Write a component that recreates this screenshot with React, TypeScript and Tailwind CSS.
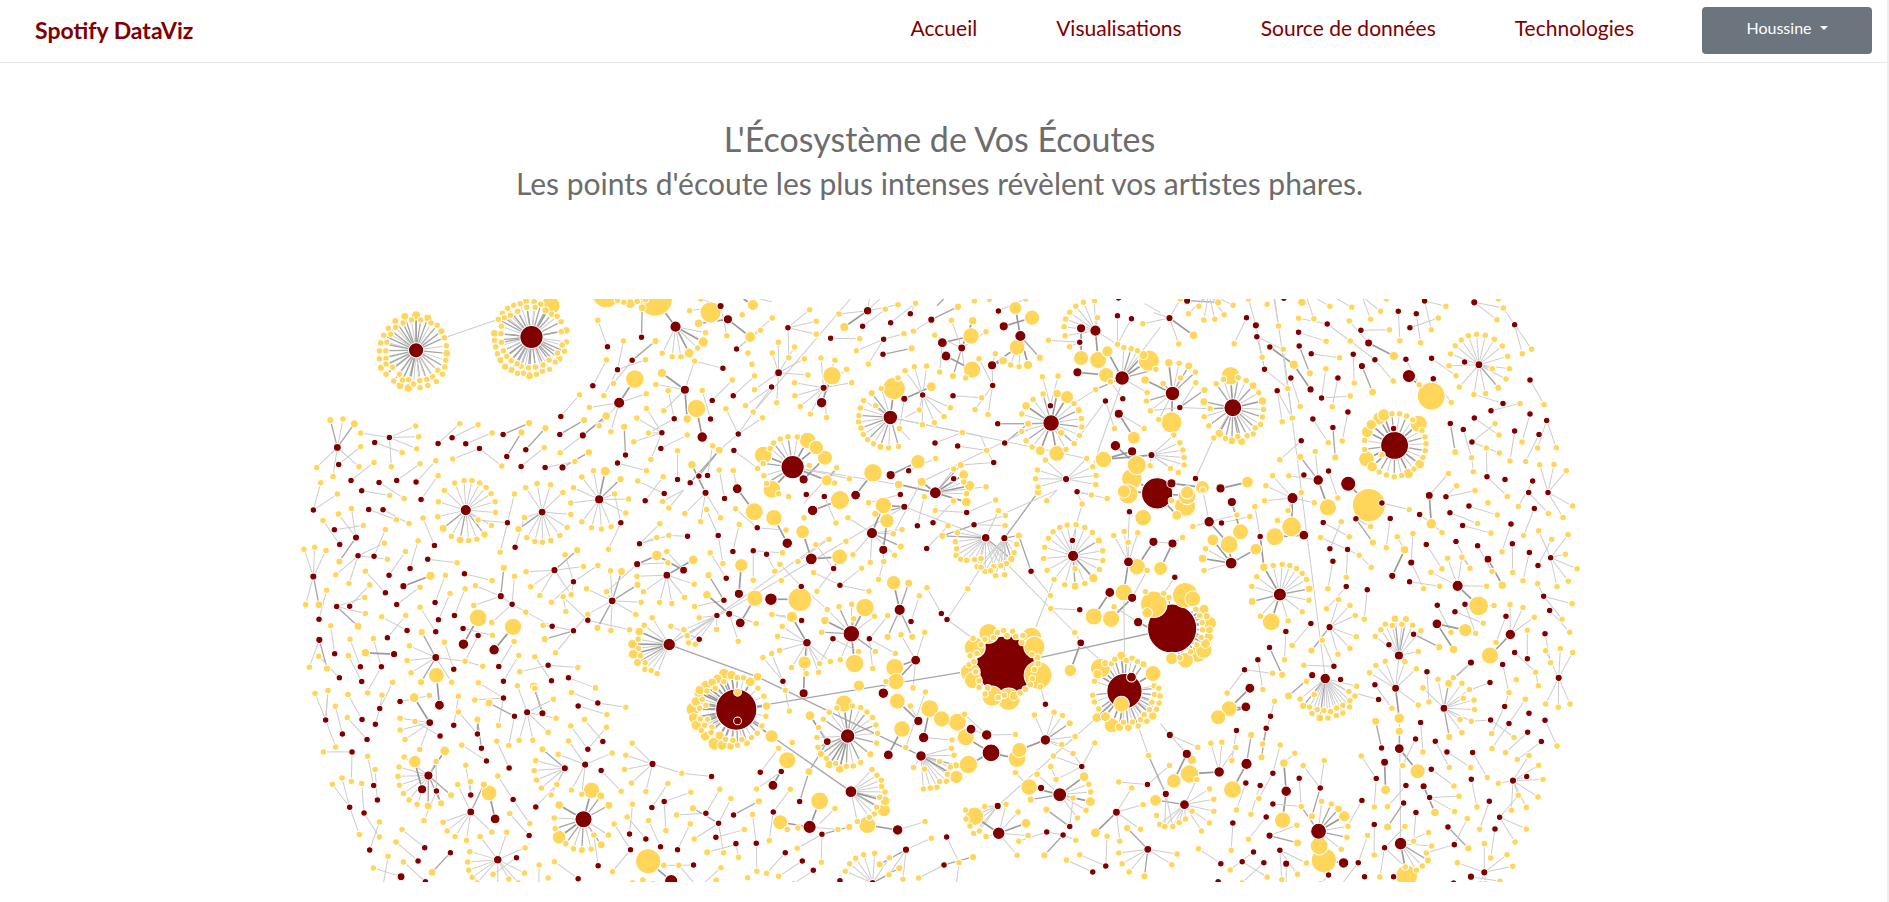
const ARTIST = "#800000";
const LISTEN = "#ffd55a";

// Each group: "artist>track track ...;" with every point written x,y[,radius].
// A leading "~" marks a link origin that is not an artist; ">" alone lists unlinked tracks.
type Sheet = { dx: number; dy: number; data: string };

const SHEETS: Sheet[] = [
  {
    dx: 0,
    dy: 0,
    data: `348,181,21>348,76,12 314,79,10 286,93,9 383,84,10 362,90 334,90 309,99 287,112 265,115 272,133 251,136 260,157 242,159 257,182 238,182 258,205 238,206 258,222 243,233,9 278,232 258,253 298,253 281,273 307,270 300,287,10 326,269 325,294,11 341,282 359,271 360,293 380,268 383,286 398,260 409,274 413,241 427,253 434,231 437,211 440,190,10 439,167 433,143 424,124,9 411,106 393,99;
~433,143>595,88;
694,141,33>678,33,9 702,35 751,47,27 736,61,9 755,73 771,79 783,95 798,121,10 783,125 799,156 793,184 786,165 772,189 778,206,9 765,216 748,238 747,210 727,244 729,225 709,253 706,231 688,257,10 685,233 670,250 663,229 652,250 651,221 634,240,9 633,212 615,230,9 620,199 601,210,9 610,182 592,191 604,157 587,171 583,151 583,130,10 603,131 604,109 595,88 607,70 613,83 631,76 623,55 641,46 653,64 660,41 680,52 705,52 722,43;
>918,12,40 952,31 971,37 990,41,13 1011,34 1036,28,9 1231,67,30;
1024,142>1026,53,10;
1126,110,15>1065,27,50 1216,128 1209,156,14 1192,174 1167,189,13 1142,200 1116,200 1086,190;
922,170>893,91;996,211>1066,153,9 940,280;952,239>970,153 1036,209 911,317;878,287>919,210;
957,338,15>1004,267,26 1038,311 868,352 932,425 897,407;
1154,299,12>1085,249,12 1067,283 1183,213 1161,387,11 1091,362;1268,235>1183,213;
1206,441,14>1189,355,26;1122,386>1104,302 1045,429;1231,387>1206,301;1236,331>1296,270;
782,379>838,314;779,433>852,390,9;848,436,9>918,378,11 780,488;
1085,428>1010,384 1039,355 1045,429 1001,455 1052,508;
1082,475>1161,435;976,495>972,410,9;952,519>1039,542;787,532,9>866,487,9 824,514;735,532>824,514;663,529>732,473;677,479>736,414,9;620,499>664,427,9;609,433>687,399,9;538,475>458,507 605,528;497,461>576,429;456,443>534,404;414,460>479,401;
112,472,10>91,390,9 129,387 163,401,10 50,532 177,530 99,559;116,523>182,470;268,442>182,429 347,408 356,440 350,476 274,530;224,457>306,487;153,571>222,517;237,577>312,625;290,571>360,521;348,576>407,512;363,628>414,557;185,602>269,616;40,660>62,578 112,612;
497,660,15>464,579 492,571 516,571 539,579 558,592 573,611 585,635 586,667 574,706 553,733,9 530,747 506,751 480,749,10 454,738 429,715,10 413,680 415,635 433,601 534,690;
1196,558>1257,480,10;1170,578>1257,480,10;1216,608,9>1175,524,11 1154,670 1261,683 1201,695;1132,568>1132,482;1222,556>1237,467;1273,625>1257,540;
897,628,12>845,561 880,542 915,543,13 961,567,9 977,669 943,612 985,627 933,710 904,717 874,713 845,695 812,639 820,593;
726,666,10>677,593 711,580 751,584 788,607 812,673 801,712 779,736 752,751 727,756 704,754 680,742 655,717,9 673,682;
1092,610>1013,573;1035,632>1089,560;622,698>643,612 600,786 534,690;645,771>673,682;
1261,48,9>1280,137 1202,27 1168,62;1283,88,12>1195,100,11;1314,432>1277,356`,
  },
  {
    dx: 1290,
    dy: 0,
    data: `-7,88,12>60,141,15;>68,45,15 36,74 503,264 732,33 777,28 670,637 6,270 53,189 65,223;
19,177>126,84 91,121;173,113>238,59 258,94 258,133 176,203;
145,248,10>144,157 126,189 193,171 222,206 233,255 139,338 73,299;
~360,27>69,366;124,291>46,346 69,366;9,317>73,258;~90,27>125,36;~40,27>68,45,15;24,432>97,383 69,366 -33,480;
301,145>388,146;412,62,11>342,111,12 326,72 503,44 418,20 455,20;397,109>465,58;481,98>556,40;540,71>556,40;603,89,9>683,50,9 549,124;460,148>521,131 378,182 414,222;458,193>544,175,9;~640,27>620,47,9;
280,293,9>272,204 314,211 349,238 364,278 193,278 194,317 210,349 240,372 289,382;274,338,14>305,257,26;
480,382,20>491,295,32 453,295 424,309,9 400,331 436,347 390,354 386,376 385,396 392,414 399,433 412,449 430,461 450,470,9 475,474 505,469;
~480,382>752,438 1069,505;
522,326,9>603,290,13 507,415;~507,415>539,450;
577,315>524,242 552,230 589,228 660,353 641,379 612,398 576,404 567,360;~567,360>523,382;
636,158,13>722,138,23 628,246;694,174,10>663,91 727,92,11 767,125 613,136 668,258,9 706,264;647,198,13>725,239,24;
668,317>754,323;614,459>696,427;682,468>769,481;790,517>769,481 691,525;~752,438>769,481;823,459>893,401,9;802,401>893,401,9;~574,575>893,420;
785,226,12>860,172,22 818,212,11 795,191 787,286;787,286>746,206 734,358 773,373;
804,63>886,27;820,109,12>905,83,21;
870,138,15>855,54,18 860,172,22 841,225 866,230 893,225,12 928,203,9;
962,399,23>887,347,11 908,328 938,312 980,310,11 1010,321,18 1031,340 1045,360,9 1053,385 1054,411 1047,436 1031,460 1007,478 992,428,9 979,490,22 930,482,13 905,471 887,452 874,424 893,401,9 874,372;
960,347>936,260 983,258;
1052,115,12>1052,204,21;1095,122,15>1103,210,24 1001,110 1004,137 1006,87 1018,67 1036,49 1059,37 1092,32 1101,83 1161,163;
1048,157>954,151 1017,170;1161,77>1161,163;1203,86>1161,163;1164,24>;
1175,264,20>1131,184,15 1180,173 1202,176 1221,182 1239,195,12 1255,212,30 1276,238 1250,307 1096,298;
~1170,290>1087,530;~1290,110>1175,264;~1096,298>1031,340;
1177,326>1140,275;1125,333>1152,415 1031,460;1041,247,12>1127,255,21;~1290,68>1242,41;
1165,371,12>1210,443,18 1241,415;1155,467,14>1219,525,27;1205,484,12>1119,508,23;1263,495,9>1119,508,23 1259,527;
1280,610,45>1204,566,29 1180,604,18;
1007,567,9>945,510 921,540 916,566 923,591 1069,505 1087,530 1097,556 1096,583;
187,531,33>99,495,25 120,475 130,459 150,447 173,440 201,441 232,451,23 258,472,20 99,520 101,557 109,580 125,598,25 290,571,15 237,526 313,579;
11,481>82,535;220,568,12>284,503,21;~319,533>290,571,15;~187,531>357,566 505,583;
>357,566 319,533;
21,596,13>72,665,25 9,541;376,615,13>428,548,26;481,555,12>563,515,20;535,542>616,505;
615,608,16>505,583,11 574,575,12 670,537 691,525,9 700,554,13 700,576 718,587,14 767,590 708,611 708,636,13;670,566>;~220,640>319,533`,
  },
  {
    dx: 2580,
    dy: 0,
    data: `27,84,9>99,136,11 55,162 -53,101 60,27;~-20,68>27,84;80,32,9>173,37,9;
~145,10>84,71 115,49 130,90 163,88 191,74 218,46 173,37,9;
>84,71 115,49 130,90 163,88 191,74 218,46;
258,83>221,161;286,106,9>264,27;289,140>368,178 305,202;328,171>400,224,12;450,298,9>400,224,12;312,238>382,295 305,202;350,302>365,395 395,384;391,264>419,349;
~343,27>354,108;~354,108>340,27 382,295;~370,190>494,1165;~286,106>312,238;~382,295>395,384;
>320,43 424,37,11 677,27 943,598 354,108 414,85 460,86 508,49 574,52 630,88 660,64;370,25>;~440,27>460,86;500,102>414,85 569,153;~470,27>508,49;~530,27>574,52;
414,127>497,154;416,168>448,250,9;452,191>537,203;483,324>496,236 569,318;532,264>515,350;578,193>581,279;604,228,9>636,306,10;601,121>687,119;624,159,10>700,198,12 566,93;643,209>569,153 698,273;~605,20>630,88 660,64;
713,64>718,152;748,113>833,84;767,71>780,158;792,33>812,119 856,49;736,208>776,284;745,258,18>812,318,40;818,266>872,337;813,205>886,257;
955,224,10>865,227 870,192 884,167 902,150 923,137 948,133 974,136 1001,148 1025,168 1041,199 1046,236 995,236 1036,267 1013,293,9 975,310 940,313 896,291;912,216>;
941,37,9>1028,54 1009,89;1062,104>1028,54 1085,191 1113,178;>1013,27;1108,270>1150,343;1027,340>940,313;991,362>1078,340;941,384>1015,435;934,456>1003,401 1016,489;869,400>884,486,9;908,418>933,503;~933,503>938,545;>938,545;979,560>977,474 1040,619;1033,568>;1062,423>1048,513;1108,372>1084,456;1158,391>1131,474 1187,473;1135,433>1095,514;1116,573>1073,649;1162,607>1137,524 1180,523 1217,542 1236,648 1207,682;
457,387>503,458;562,366>545,453;517,412>524,502,9;422,452>358,509;
702,466,40>656,385,18 670,375,17 694,371 717,371 738,378 757,390 774,401,24 784,421 793,441 796,461 794,482 787,502 777,522,13 760,537 744,550,14 723,556 701,560 678,555 656,546 635,530,14 618,507,22 664,494 612,478 612,451 620,425,16 632,404,14;699,415>;
217,353,25>210,257,26 189,268 233,263 257,271 278,287,10 295,308 306,333,11 309,358 306,381 300,403 284,414 278,432 260,437 243,454,10 232,439 214,452,10 195,445 176,430,11 145,407 131,380 149,356 130,335,10 167,281;
105,565>160,444;~217,353>160,444;
36,310,20>25,218,11 56,220 85,228,10 60,264 105,246 33,397,30 8,280 -30,362 -42,333 -5,388 -46,270,11;
58,352>106,278 132,300,9 149,356 -30,362;
-27,495,9>58,458 67,480 71,502 71,525 54,547 30,535 40,435;
33,580,12>126,592,19;180,595,12>261,576,16;>80,607,18;
430,555>;473,570,14>419,500,9 464,484 385,557 502,652,24;504,543>532,625;563,581,21>625,645,48;>336,557;
~806,616>864,550;~856,620>888,587;>864,550 888,587`,
  },
  {
    dx: 0,
    dy: 600,
    data: `206,58>289,89;249,59>327,100;103,119>190,106;168,142,9>115,72 154,55 118,214,9;119,163>69,91;174,197>253,159 262,207 107,254;~174,197>147,280;>147,280;222,198>256,118;403,166>369,84;383,207>471,218;330,235>354,152;267,255>316,184;310,288,9>391,257,12;
40,259,9>12,177 44,171 78,181 17,343 57,344,10;57,387>80,300;110,349>194,322 196,370 174,408,10;149,348>209,284;256,308>196,243;290,343>360,291;405,337>436,255;415,389>450,310;463,376>495,296;321,421>245,380;262,443>317,376;407,425>360,351;493,251>576,271;
602,318,9>611,233,9 526,287 521,346 636,342;636,342>643,258 575,397 677,366;756,408>677,366 729,405;820,422>734,447,9 766,488 756,408 863,372;863,390>789,320 988,419;
763,240,9>678,245 692,290 719,316 831,180,9 850,229 813,314;820,275>795,194 893,226 754,336 813,314;~789,320>797,364;>797,364;
936,332,10>931,242 964,244,10 1012,284,9 1023,336 1007,373 932,421 892,413,9 863,372 919,305 859,296;
1011,222,9>919,305 1070,196,14 1103,218;1150,240,10>1070,196,14 1100,184;1100,255,10>1179,209,13 1010,258 1030,305 1078,337 1115,340 1153,321 1182,282;
962,98>943,12 925,177;1018,161>1079,101 1070,142 1106,136;1162,138>1106,136;~1150,0>1087,34 1106,54;>1087,34 1106,54;1254,136>1219,58 1268,220;1278,264>1230,188;1271,330>1225,255,9 1183,349;1287,371,9>1220,314,11;1197,447>1112,408;
1250,376>1151,419 1161,437 1165,458 1185,462 1249,418 1197,383;
1107,463,17>1032,405 1056,383 1017,424,11 1014,447 997,462,13 1015,474 999,492,13 1021,497 1012,517,10 1035,518 1034,537 1053,541 1071,550 1151,419;
~1107,463>1250,376 1812,50;~1250,376>1580,147;~1107,463>1372,560,9;
58,449,9>28,531 81,535,9;104,491>92,407;181,530>150,447;244,530>220,445 200,608;118,563>56,498;185,574>145,497;282,492,9>196,488,11;
407,502,10>365,426,9 328,467 321,511 333,548 363,576,9 455,576 495,513;490,462,14>534,383,25;582,479,14>639,410,24;489,415>577,435;534,436>495,513;~495,513>548,528;>548,528;461,537>433,456;596,529>642,454;610,573>656,496;744,525>659,545 833,532;754,572>704,500;805,563>886,593;418,645,13>409,555,22;239,655>278,576 246,615;611,623>535,578;727,669>701,588,11;681,666>652,587;77,689>84,601`,
  },
  {
    dx: 1290,
    dy: 600,
    data: `171,159,14>131,83,23;247,61,14>329,30,27;228,13>;>145,11 175,19 1193,12,28 1238,83,23;282,19>317,99;510,13>415,38;81,113>16,56 167,120;8,184>27,103;69,182>157,188 69,270;109,192>134,243;26,311,12>33,225,18;30,398,13>74,324,23;-3,371,9>24,453 78,400;122,327,17>209,328,34;213,289>149,222 291,358;
243,206,16>217,125,19 328,200,22;310,235>257,164 260,303 328,200,22;~203,214>296,147;>347,153 153,271 221,83 203,214 296,147;
425,129,15>459,46,23 353,83 368,194 420,217 493,195 511,169,9 489,131 515,118;459,179,12>470,92,20 460,214;~460,214>445,268;>445,268;
522,50,9>459,46,23 435,71,9;~570,-20>495,120;561,107>582,20;608,98>670,33;589,175>653,107;709,67>615,61 796,30;329,285>250,247 394,234 416,303;
508,359,15>490,278,20 535,279,10 472,440,9 546,440,9;542,394>567,317;
363,431,23>404,352,26 284,391,11 274,426 291,358 326,350 364,342 370,386 433,378 435,484 373,520,26;
308,446>268,520 385,484;417,446>472,377 427,535 495,490;~363,431>330,509;>330,509;
556,510,13>583,426 512,434 493,532,25 497,574,23 548,593;
230,458,11>185,380,15 156,409 142,438 148,481 184,532 223,517,18 228,550 265,546 268,520 300,514;214,391>125,373;~185,380>125,373;
158,573>98,502 124,490 165,600;
766,143,11>681,128 675,155 679,176 677,196 691,207 709,210 733,208 752,205 740,230 764,244 790,229 828,220 843,207,9 811,227 804,62 636,137,9;
822,144,9>865,136,9 859,162 851,187 843,207,9 828,220 811,227 781,242 796,257 823,254 764,244 752,231 740,230 923,6,10;
731,104>636,137,9 824,106 825,76;~522,50>766,143;902,243>865,136,9 960,316;~712,296>752,231;650,388>712,296 728,445;633,370>590,293;
1048,359>961,355;~828,220>961,355;~961,355>1033,427;
1028,197,15>968,125 988,112 1010,105 1037,104 1063,112 1086,127 1105,151,9 1117,182 1117,211 1107,238 1089,264,12 1063,280 1034,288,10 1003,284 971,268 950,240 940,205 943,171 954,144 1034,236;1026,151>;
~1055,42>1028,140;~971,268>916,412;~980,0>949,32;>949,32;~980,0>822,70;1040,5>1130,25 1083,15 1055,42;
1197,65>1193,156;1194,215,13>1150,136 1181,124 1222,128 1193,156 1180,307,24;1269,155,12>1220,230,23;
1138,307,13>1090,379,24;1205,323,12>1142,386,24 1250,241;1223,396,12>1151,350;~1223,396>1260,415,11;>1250,368,14 1245,305 1290,235,19;
1051,458,10>1020,541,17 1033,427;~1051,458>1110,510;
~825,525>1325,415,9;~825,525>18,658,9;>386,586,15;
825,525,86>775,430,28 733,472,30 903,443,30 912,470,30 923,555,40 720,547,28 728,570,24 728,445 764,447 789,443 801,427 820,421 830,437 847,423 856,439 878,436 875,457 905,493 921,502,9 923,521 912,538 906,565 900,583 752,464 740,490 719,497 716,524 736,545 731,515 746,572 746,592 772,593 835,627,32 785,618,29 764,611 803,622 822,615 851,617,12 869,608 885,597;
1182,603,51>1110,534,28 1101,552,12 1124,519,9 1143,521 1153,507 1173,497,12 1187,511 1205,504 1221,514 1239,522,9 1268,550,22 1092,573 1087,615 1092,635 1105,656 1099,682,13 1125,679,13 1144,705,21 1167,710,11 1179,696 1194,712,10 1206,695 1223,707 1230,688 1249,693 1241,673 1267,677,11 1257,658 1278,657 1264,636 1286,638 1272,613 1289,617 1271,587 1285,594 1173,642,22;
1203,561,13>;~1182,490>1180,307;~1223,707>1254,796`,
  },
  {
    dx: 2580,
    dy: 600,
    data: `35,415,72>74,315,36 97,326,22 25,322 -20,342,38 106,357 131,357,13 118,377 139,378,9 125,398 148,399,18 126,419 147,419,10 122,442 144,441,13 109,464 135,460,13 130,480,23 113,491,24 90,485 75,510,22 58,503 34,505,17;
43,261>10,310;36,160,12>0,235,19 66,142;~36,160>-15,155;
-10,10,45>74,47,30 80,17,25 33,32 49,76,13;
146,95,14>206,163,25 97,109 229,75 127,0;183,99>268,79;214,36,12>240,125,22 229,75;212,219,16>157,149,16 135,176 126,205,11 131,241 286,177,16 206,163,25;
299,139>283,49 310,231,11;396,24,15>312,32 383,61 393,110,28 422,7 461,38 336,-43 316,-13;430,135,13>343,140,25 351,91;
358,313,18>310,231,11 338,226 365,222 388,226 408,235 425,250 438,268 446,296,10 445,330 425,365 383,392 332,395,25 300,378 275,334,10 274,289 289,260;
488,97>566,140;508,176>542,95;561,178>480,142 596,195 557,261;~596,195>632,232;>632,232;517,213>502,296;557,289>498,356;620,299>611,387;>532,24;
586,86>637,157,9 630,109;664,39>746,58;689,85>677,173;695,257,9>732,179,11;~732,179>710,140;>710,140;752,217,9>757,130 789,295;747,275>837,288;797,163>844,236;777,73>844,127;806,16,10>812,101,14;856,20>943,2;868,68>951,100;906,106>991,129;925,48>1010,75;886,154>928,234;
891,287,15>811,246 861,204 904,201 978,288 954,347,28;~954,347>1000,346;>1000,346;~904,201>928,234;951,167>994,244;982,207,10>1025,285,11;1051,102>1024,185;1055,161>1056,247;1104,7>1163,70;>982,38;1121,55>1089,136;1106,187>1087,272;1132,226>1173,148;
1170,203>1134,122 1222,133 1214,192 1249,236 1223,273 1189,290;1149,318>1131,281 1234,341 1204,387;1167,361>1227,426;
830,345>871,426;829,401,13>914,420,18 879,478,11;913,342>945,429;883,365>968,399;1036,378>1006,457;1049,433,14>988,496,24 1048,343 1087,352 1121,381;1100,506>1100,420;1062,487>1125,546;1153,431>1170,518;
1194,563,9>1155,482 1199,475 1236,487 1155,641 1193,651 1228,641;1026,523>1045,607;931,517,9>864,580,10 878,563;988,577>926,600;799,545>805,635;~1125,546>1133,587;>1133,587;
507,411,9>534,328 568,346 584,376 587,440 568,474 532,492 453,481,9;451,400>395,466;376,424>372,509;327,472>365,554,9;292,509>307,598;252,539>336,549 200,610;268,594,13>206,655,22;520,528>430,525 485,450;455,555,9>384,617,10 438,573;
494,565,14>588,588 565,604 583,617 568,631 567,650 547,645 547,668 528,653 527,676 510,664 502,683 490,661 478,683,10 470,658 454,670 447,650 428,647,9 419,626 461,613;540,568>;654,628>565,604;
715,496,12>703,386,10 674,402 661,419 644,438 695,406 736,387,9 724,403 756,405 781,422 773,484 705,594;685,464>;759,432>836,471,9;
705,594,10>627,548 646,526 674,513 733,515 767,536 773,644 716,684,14;643,584>694,654;
850,654,10>832,567 864,580,10 904,579 926,598 908,624 940,629 942,658 932,693 898,688 904,727 866,740,9 787,593;
~717,690>720,1060;>1067,569`,
  },
  {
    dx: 0,
    dy: 1200,
    data: `77,89>45,9 84,1 107,170;127,131>106,48;186,88>144,13;201,148>142,82;226,102>239,55;>203,8 744,563 1028,569 997,577 1059,580;156,185>70,185 154,274;
389,97,10>342,22,13 300,84 300,119 315,148 359,178;420,137>345,94;300,34>388,16;461,105>475,18;532,131>475,65 532,88,9;544,174>532,88,9;559,212>485,164;627,233>590,153;610,23>524,29 595,106;643,78>567,38,10 626,166;681,66,9>760,27 768,84 744,126 698,150 657,150;727,69,9>704,-6;834,47>920,73;893,38>977,51 814,7;863,177>812,107 919,111;908,154>853,88;
385,256,12>434,182,13 408,214 312,200 297,230 294,258 298,285 310,310 327,329 351,342 384,347,10 423,339,9 453,315,9;366,297,12>344,214,17;409,302>408,214 423,339,9 372,391;
221,286>203,198;232,329>225,238;149,351>97,282 126,263 178,433;192,368>185,280 238,440;209,479>238,395;374,472>306,418;354,512>288,455;451,487>396,546,10;303,559,10>220,533;376,574>310,515;~250,580>264,498;>264,498;
512,365,10>473,283 551,283,9 429,396 441,422 465,439 499,450 575,425;512,314>497,225 511,274;585,386,13>567,308,22;639,328>593,257 689,400;687,436>629,370;707,350>770,282;
794,234,9>727,177,9 707,211 702,241 709,269 724,293 753,314 770,282;855,223,9>805,152 774,192 936,188 814,299 845,312;903,241>963,303;
1057,221,9>996,159 977,195 973,238 994,278 1037,304 1145,249;1234,259>1145,249;1055,352>1103,280;1092,334>1172,306 1097,421;1217,369>1259,297 1129,374;1255,399>1178,354,9 1182,446 1292,325 1270,487;1247,441>1332,418;
850,387,24>874,300,23 902,317,10 926,345,10 925,434 903,463,10 873,476 845,479,9 820,475 797,460 777,441,19 765,415 762,383 777,344,11 881,434;894,526>881,434;
988,431>997,342;1037,446>981,380;1081,469>1045,391;991,478>942,401 937,544;1132,478>1170,401;1180,524>1136,525;~1136,525>1091,525 1190,588;>1091,525;1113,572,18>1044,513,36;834,565>763,514;
593,508,11>540,439 620,426 675,472 509,484 503,515 506,540 516,561 531,577 626,566 654,577 673,548 593,590;649,502>579,552;~716,580>717,524;~1300,465>1221,486;~1210,580>1262,532;>1248,570 717,524 1221,486,9 1262,532`,
  },
  {
    dx: 1290,
    dy: 1200,
    data: `18,58,60>-94,8,13 -70,2 -103,34,13 -84,27 -73,45 -112,57,19 -92,54 -110,83,14 -90,86 -102,105,14 -68,87 -77,105 -87,121 -55,110 -75,138,13 -58,127 -32,136,12 -14,147 -47,160,18 -24,165,14 -18,-48,16 -38,-34,13 -54,-24,11 -73,-14,14 -19,-25 -45,-6 -92,0,12 4,-45,12 21,-37 40,-37 60,-25,13 83,-6 22,6,10 101,18 109,47,11 107,78 95,107 124,138,18 81,129 64,142 50,159,9 35,148 22,165 8,150 1,168,10;
22,92,10>;220,9,12>223,-83,18;~165,0>177,62;>177,62;
352,137,20>341,40,24 320,53 366,47 391,52 410,65 427,82 437,104 442,129 439,158 420,192,9 391,217 369,227 348,228 328,236,11 316,220 297,223,11 288,204 272,191,9 263,171 260,142 279,87 297,66;
291,154,10>239,76,13 265,112 236,244,10;208,334>236,244,10;>186,157 52,562 82,-40,11;
90,246>145,174;153,244>79,296;128,285,13>171,210,24;10,374>86,333,9;129,365>180,297 117,451;
362,304,16>425,238 440,255 453,270 454,289 464,305 448,321 464,332,13 461,360,18 439,351 432,371 417,381 381,394;
~362,304>124,138,9;~82,-40>572,197,9;
238,410,18>268,332,25 150,396,21 203,413 323,418;~150,396>171,418;>171,418;275,432>357,410,9 201,474 273,516;502,419,14>411,404,24 584,394;~268,400>314,355;>314,355 42,418;78,459>67,373 80,543;17,460>25,501;
165,487>109,549;216,512>145,558;249,540>190,580;427,578,9>345,543 358,520 376,504 400,493 433,489 477,502 476,553 507,533,9;527,478,9>448,522,9 476,553 518,567 603,444;329,571>;
649,440>686,517;641,524>565,563 728,500,9;~686,517>677,590;
459,9,14>467,-26;564,92,12>501,33,22 540,47;474,194,13>515,116,23;580,142,14>598,55,25 665,149;~585,5>526,172;>526,172;
572,197,14>550,232 582,236 579,296 600,293 620,291 628,274 648,273 651,252 660,230 677,225,9 628,214 671,195 663,174 678,260,18;
>634,86,23 681,96,25 585,5;722,117,13>;769,134,14>702,72 855,133 722,117;782,188,25>706,141,24 714,223,26 860,205,25;
945,149,14>867,179,21 912,74 971,66 996,76 1018,99,9 1034,139 994,163 1028,190;945,42>930,-10;1054,229>969,197 1093,158 977,268 1028,190;
802,347,9>969,197 706,359 763,349 707,386 719,407 730,430 747,422;~969,197>1034,139 1099,82;
805,429,17>732,378,26 827,342 767,439 863,365 887,399,13 893,436 860,495;949,425>865,453;998,434>949,425 1036,450 942,495,9;
988,313,19>896,290,23 920,252 901,328,9 1061,259,13 1075,282 1081,305 1080,334,13 1067,360 1041,383 1028,323;~896,290>855,247;~961,229>977,268;>961,229 855,247;932,293,9>;
1018,409>948,358,9 1028,323;1158,366,10>1204,293 1238,343 1230,417 1168,453 1095,428,13;1251,283>1165,275 1317,226;~1254,196>1306,311,9;>1254,196 1275,330,16 1278,376 1288,402;
1126,527>1130,438 1048,493;1087,545>1008,509;1252,477,10>1190,413,9 1165,488 1175,520 1196,545 1242,558,9 1324,523 1340,491`,
  },
  {
    dx: 2580,
    dy: 1200,
    data: `28,134,9>112,171 79,191;~0,100>28,134;79,191,12>40,272,20 94,209,12;256,50,13>206,55,22 173,81,21;228,121>214,211;176,245,14>87,251,26 151,159 184,156 226,172;330,78>342,33 306,161;317,114>306,161 303,201,9;258,221,15>272,134,9 216,298,25;
72,343,13>109,268 147,296 160,327 160,363 147,398 123,422 95,363 75,386 56,397 37,409 13,409;~72,343>-10,330,9 0,400;16,311,9>37,409 13,409;~16,311>-10,260;>27,226 200,8;
256,278>228,359;299,286>271,372;337,249>359,164 295,325;377,303,14>370,218,11 366,390,23;~370,218>403,189;>403,189;337,341>422,349;416,264>422,349;479,293>428,226 491,211 454,378,9;317,380>264,447;327,436,9>409,405 411,458,10;217,398>212,480;
474,423,22>422,349 483,334 512,341 534,356,10 551,378,15 562,408 559,441 542,477 476,467,25;549,518,14>490,510,36;504,554>480,580;604,331>562,408;593,517>621,436;~593,517>545,580;612,559>;181,520>114,475;279,485>209,539;245,514>320,560;310,517>245,577;358,480>438,518 364,568 411,552;~377,590>377,520;377,520,9>;173,574>;
663,173>645,93,10;647,265>602,197 641,350;672,216,10>675,299,13;641,403>641,494;716,175,13>771,243,21 716,123,10;765,146>726,226;780,97>787,185;824,153>866,232;859,185>930,232;812,237>880,287;736,286>681,349;729,338>681,410,10;789,288,9>823,367,11;807,322>895,318 882,364;766,367>759,453;
990,89>932,93 1060,142;1032,49>993,130 1045,7;1045,100>994,175 1094,27;1105,69>;1153,90>1189,167;1101,126>1035,187;1142,154>1070,208;936,187>980,262;932,267>949,350;986,333>957,417;
1057,271,9>1105,196 1134,225 1147,268 1132,320 1097,352 1052,360 1013,280 1098,259;1098,259>;1017,381>1073,315 1097,416 1063,455;~1057,271>1073,315;1003,416>990,503;862,410>923,474,9;881,463>797,488 920,385;672,472>733,409 734,530 658,560;
720,460,17>804,427 813,467 802,510,9 785,527 767,540 738,557,31;699,559>;971,546,9>890,517 971,460 1039,493 1056,528 960,580 975,580;931,559,9>1018,573;879,578>`,
  },
];

type Dot = { x: number; y: number; r: number; artist: boolean };
type Link = { x1: number; y1: number; x2: number; y2: number; color: string; width: number };

function buildNetwork() {
  const dots = new Map<string, Dot>();
  const links: Link[] = [];
  const add = (x: number, y: number, r: number, artist: boolean) => {
    const key = x + ":" + y;
    const known = dots.get(key);
    if (known) {
      known.r = Math.max(known.r, r);
      known.artist = known.artist || artist;
    } else dots.set(key, { x, y, r, artist });
  };
  for (const { dx, dy, data } of SHEETS) {
    const parse = (s: string) => {
      const [x, y, r = 8] = s.split(",").map(Number);
      return { x: x + dx, y: y + dy, r };
    };
    for (const raw of data.split(";")) {
      const [head, tail = ""] = raw.trim().split(">");
      const virtual = head.startsWith("~");
      const from = head ? parse(head.replace("~", "")) : null;
      if (from && !virtual) add(from.x, from.y, from.r, true);
      tail.trim().split(/\s+/).filter(Boolean).forEach((item, index) => {
        const to = parse(item);
        const offEdge = to.y < 27 && !virtual && to.r === 8;
        if (!virtual && !offEdge) add(to.x, to.y, to.r, false);
        if (!from) return;
        const heavy = to.r >= 11;
        const medium = to.r >= 9 || (from.r >= 20 && index % 2 === 0);
        links.push({
          x1: from.x,
          y1: from.y,
          x2: to.x,
          y2: to.y,
          color: heavy ? "#999999" : medium ? "#a6a6a6" : "#cccccc",
          width: heavy ? 5 : medium ? 4 : 3,
        });
      });
    }
  }
  const ordered = [...dots.values()].sort((a, b) => b.r - a.r || Number(a.artist) - Number(b.artist));
  return { ordered, links };
}

const network = buildNetwork();

function ListeningNetwork() {
  return (
    <svg viewBox="0 27 3870 1749" className="ml-[3px] w-[68.4%]" role="img" aria-label="Réseau des artistes écoutés">
      {network.links.map((l, i) => (
        <line key={i} x1={l.x1} y1={l.y1} x2={l.x2} y2={l.y2} stroke={l.color} strokeWidth={l.width} />
      ))}
      {network.ordered.map((d, i) => (
        <circle key={i} cx={d.x} cy={d.y} r={d.r + 1.75} fill={d.artist ? ARTIST : LISTEN} stroke="#ffffff" strokeWidth={3} />
      ))}
    </svg>
  );
}

const NAV = ["Accueil", "Visualisations", "Source de données", "Technologies"];

export default function App() {
  return (
    <div className="min-h-screen border-r-2 border-[#eeeeee] bg-white font-['Lato','Open_Sans',sans-serif]">
      <header className="flex h-[63px] items-center justify-between border-b border-[#e7e7e7] pr-[15px] pb-0.5 pl-[35px]">
        <a href="#" className="text-[23px] font-bold text-[#800000]">
          Spotify DataViz
        </a>
        <div className="flex items-center gap-[68px]">
          <nav className="flex gap-[79px] pb-1">
            {NAV.map((label) => (
              <a key={label} href="#" className="text-[21px] leading-8 text-[#800000]">
                {label}
              </a>
            ))}
          </nav>
          <button type="button" className="flex h-[47px] w-[170px] items-center justify-center gap-2 rounded bg-[#6c757d] pb-1 text-base text-white">
            Houssine
            <span className="border-x-4 border-t-4 border-x-transparent border-t-white" />
          </button>
        </div>
      </header>
      <main className="flex flex-col items-center pb-5">
        <h1 className="mt-[57px] pr-2 text-[34px] leading-[38px] text-[#6c6c6c]">L'Écosystème de Vos Écoutes</h1>
        <h2 className="mt-2 mb-[99px] pr-2 text-[30px] leading-[34px] text-[#6c6c6c]">
          Les points d'écoute les plus intenses révèlent vos artistes phares.
        </h2>
        <ListeningNetwork />
      </main>
    </div>
  );
}
